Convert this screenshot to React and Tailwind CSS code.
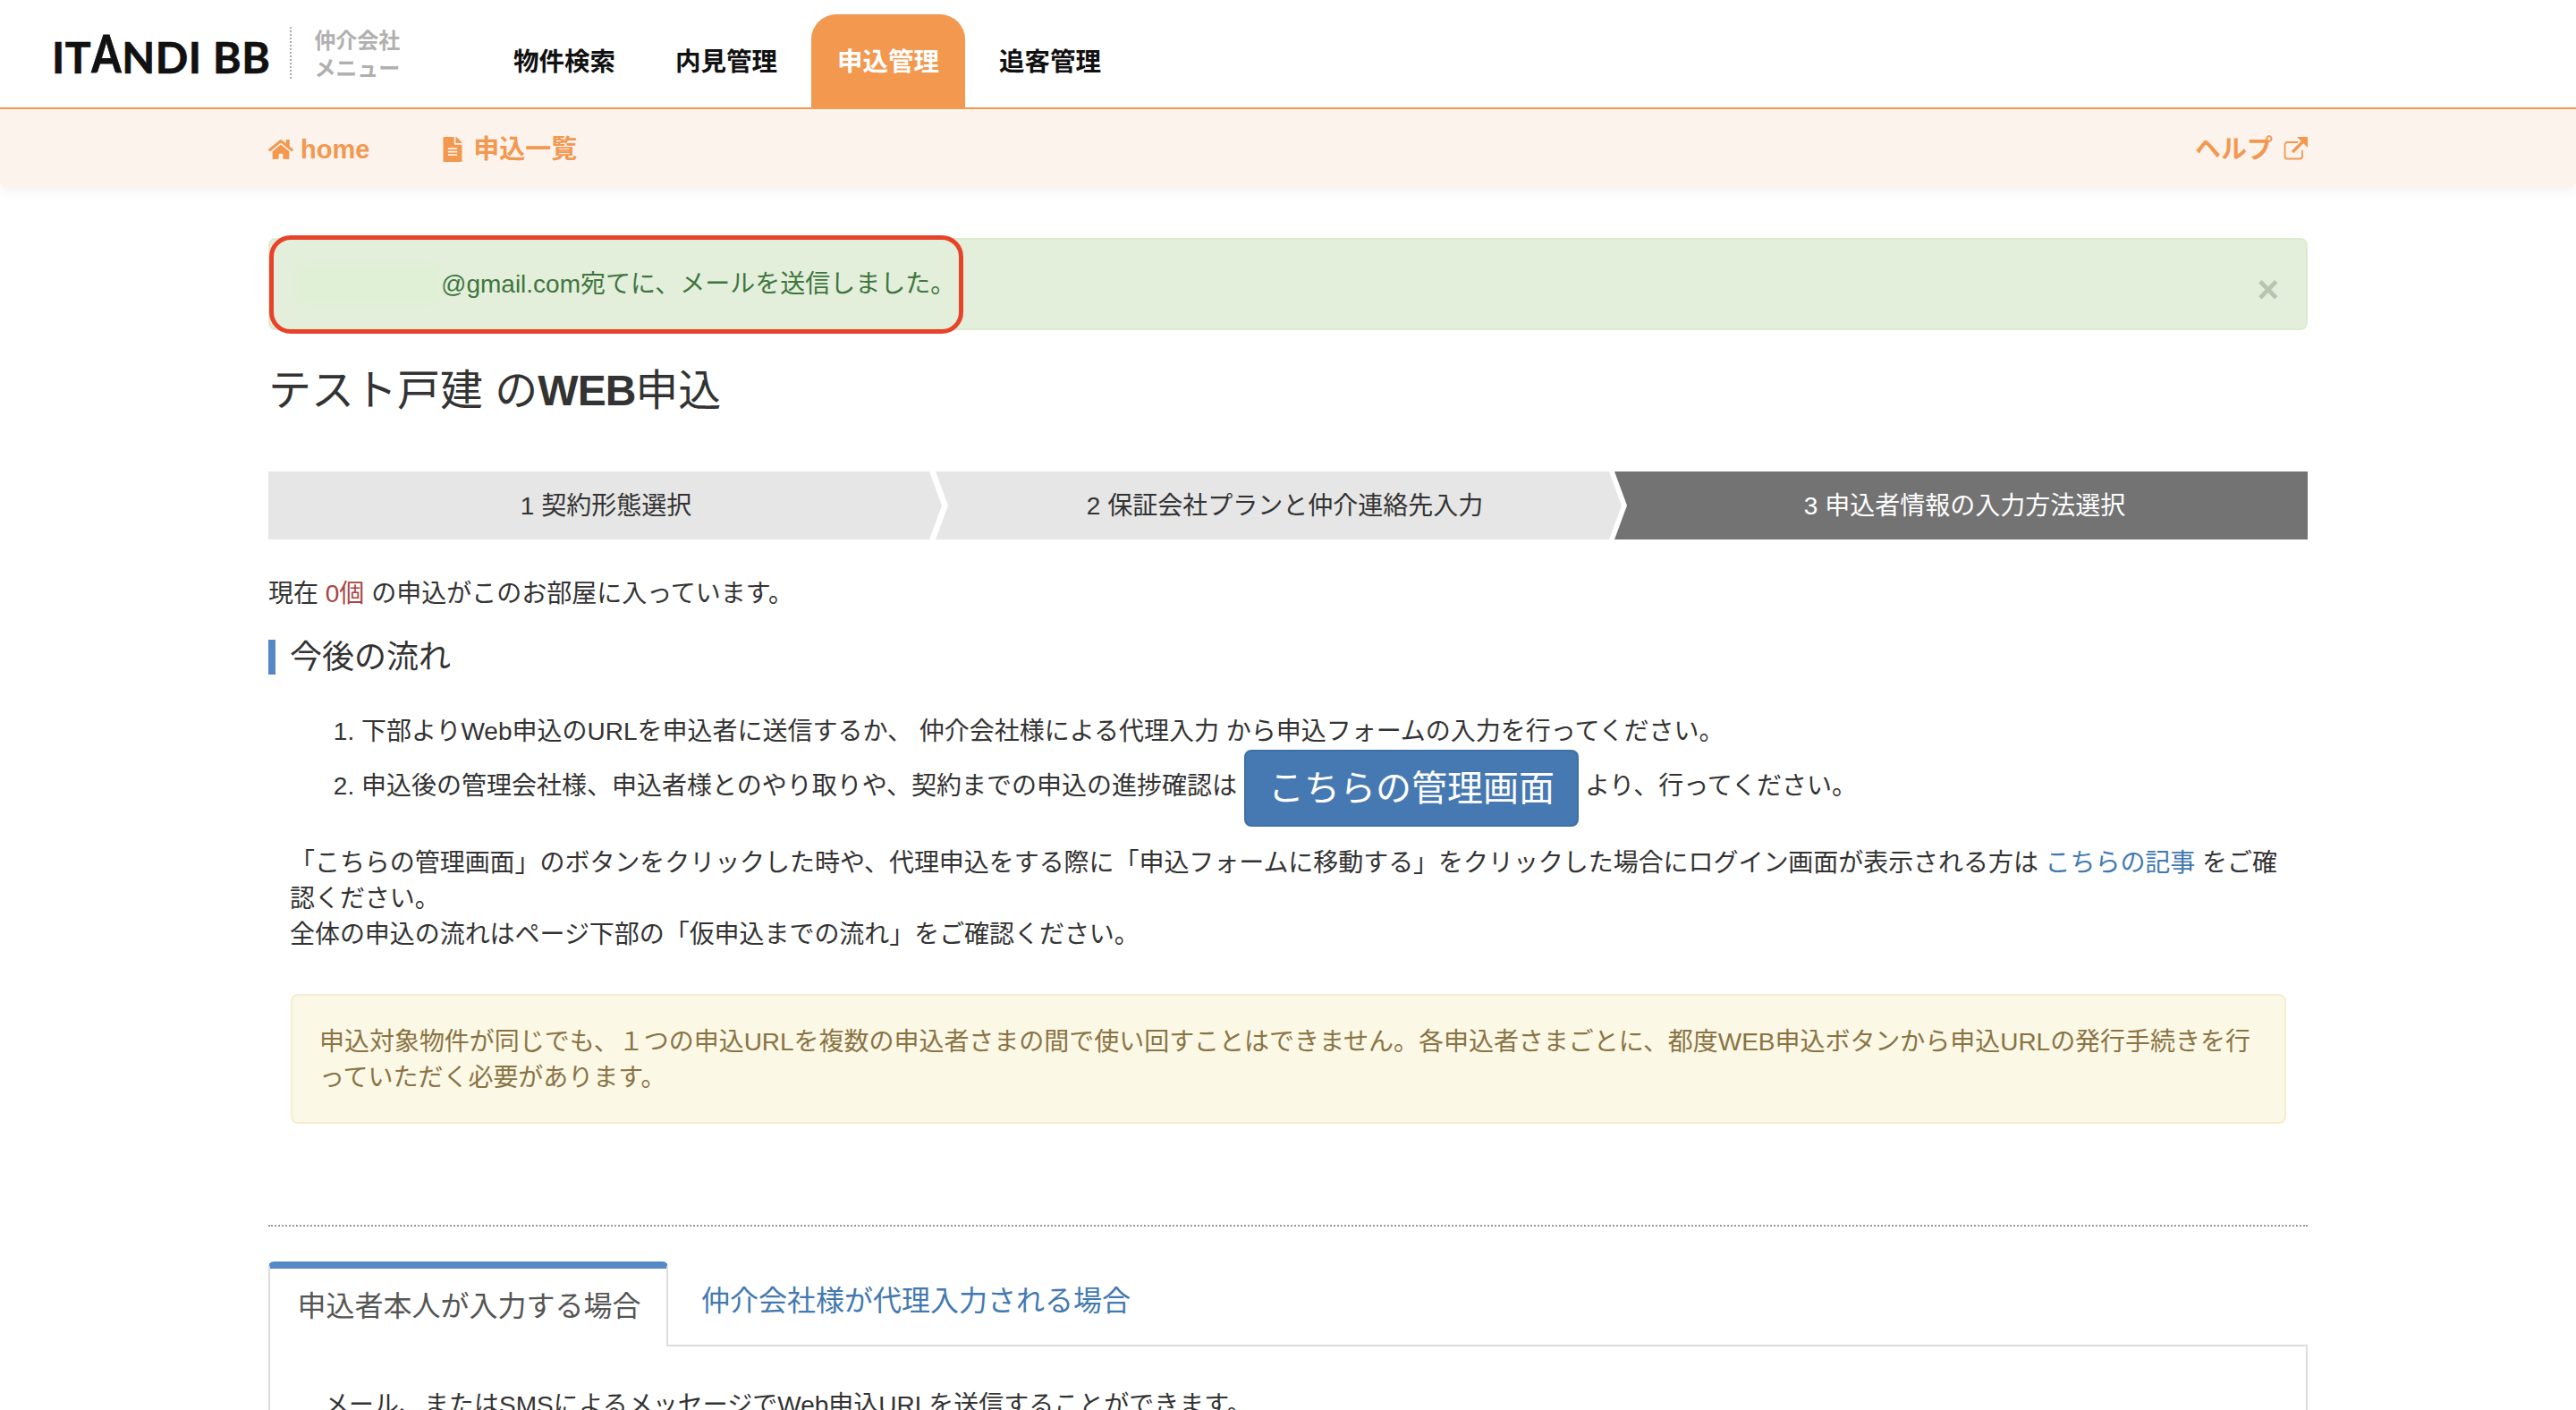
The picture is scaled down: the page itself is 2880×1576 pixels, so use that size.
import { FaHome, FaFileAlt } from 'react-icons/fa';

const navItems = ['物件検索', '内見管理', '申込管理', '追客管理'];

function ExternalIcon() {
  return (
    <svg viewBox="0 0 27 26" className="w-[27px] h-[26px] ml-[12px] mt-[-3px]" fill="none" stroke="#f2984f">
      <path d="M16 6H4.500a3 3 0 0 0-3 3v12.500a3 3 0 0 0 3 3H18a3 3 0 0 0 3-3V15" strokeWidth="1.800" />
      <path d="M10 17 L22 5" strokeWidth="3.400" />
      <path d="M15 0h12v12z" fill="#f2984f" stroke="none" />
    </svg>
  );
}

export default function App() {
  return (
    <div className="h-[1576px] overflow-hidden bg-white text-[28px] leading-[40px] text-[#333] font-['Liberation_Sans','Noto_Sans_CJK_JP',sans-serif]">
      <header className="h-[122px] flex border-b-2 border-[#f2984f] bg-white">
        <div className="w-[545px] shrink-0 flex items-center pl-[58px]">
          <span className="font-['Lato',sans-serif] font-bold text-[48px] leading-none tracking-[0.6px] [-webkit-text-stroke:0.7px_#111] text-[#111] mt-[8px]">
            IT<span className="inline-block origin-bottom scale-y-[1.2]">A</span>NDI BB
          </span>
          <div className="h-[58px] ml-[22px] border-l-2 border-dotted border-[#aaa] mt-[-2px]"></div>
          <div className="ml-[25px] text-[24px] leading-[31px] font-bold text-[#b0b0b0] mt-[1px]">
            <div>仲介会社</div>
            <div>メニュー</div>
          </div>
        </div>
        <nav className="flex gap-[9px] pt-[16px] text-[28.5px]">
          {navItems.map((item) => (
            <div
              key={item}
              className={
                item === '申込管理'
                  ? 'w-[172px] h-[106px] rounded-t-[28px] bg-[#f2984f] text-white font-bold flex items-center justify-center'
                  : 'w-[172px] h-[106px] text-[#111] font-bold flex items-center justify-center'
              }
            >
              {item}
            </div>
          ))}
        </nav>
      </header>

      <div className="h-[88px] bg-[#fdf3ed] rounded-b-[8px] shadow-[0_6px_12px_rgba(0,0,0,0.04)] px-[300px] flex items-center justify-between font-bold text-[29px] text-[#f2984f] pt-[2px]">
        <div className="flex items-center">
          <FaHome className="w-[28px] h-[26px] mr-[8px]" />
          <span className="mr-[81px]">home</span>
          <FaFileAlt className="w-[24px] h-[28px] mr-[11px]" />
          <span>申込一覧</span>
        </div>
        <div className="flex items-center">
          <span>ヘルプ</span>
          <ExternalIcon />
        </div>
      </div>

      <main className="w-[2280px] mx-auto pt-[56px]">
        <div className="relative h-[103px] flex items-center justify-between bg-[#e3efda] border-2 border-[#dcebcf] rounded-[8px] pl-[29px] pr-[30px] text-[#3f7540]">
          <div className="flex items-center">
            <div className="w-[163px] h-[47px] rounded-[14px] bg-[#e0f0d6] blur-[2px]"></div>
            <span className="ml-[-1px] pt-[1px]">@gmail.com宛てに、メールを送信しました。</span>
          </div>
          <span className="font-bold text-[42px] leading-none text-[#b7c5b0] mt-[12px]">×</span>
          <div className="absolute top-[-5px] left-[-1px] w-[776px] h-[110px] border-[5px] border-[#e8432a] rounded-[24px]"></div>
        </div>

        <h1 className="mt-[35px] text-[48px] leading-[66px] font-normal">
          テスト戸建 の<span className="font-bold tracking-[-1px]">WEB</span>申込
        </h1>

        <div className="mt-[57px] flex h-[76px] text-[28px]">
          <div className="w-[755px] bg-[#e6e6e6] flex items-center justify-center pt-[1px] [clip-path:polygon(0_0,739px_0,753px_50%,739px_100%,0_100%)]">
            <span>1 契約形態選択</span>
          </div>
          <div className="w-[767px] ml-[-9px] pl-[14px] pt-[1px] bg-[#e6e6e6] flex items-center justify-center [clip-path:polygon(0_0,753px_0,767px_50%,753px_100%,0_100%,14px_50%)]">
            <span>2 保証会社プランと仲介連絡先入力</span>
          </div>
          <div className="flex-1 ml-[-8px] pl-[8px] pt-[1px] bg-[#737373] text-white flex items-center justify-center [clip-path:polygon(0_0,100%_0,100%_100%,0_100%,14px_50%)]">
            <span>3 申込者情報の入力方法選択</span>
          </div>
        </div>

        <p className="mt-[41px]">
          現在 <span className="text-[#a94442]">0個</span> の申込がこのお部屋に入っています。
        </p>

        <h2 className="mt-[31px] h-[39px] border-l-[8px] border-[#5588c5] pl-[16px] text-[36px] leading-[40px] font-normal">今後の流れ</h2>

        <ol className="mt-[44px] list-decimal pl-[104px]">
          <li>下部よりWeb申込のURLを申込者に送信するか、 仲介会社様による代理入力 から申込フォームの入力を行ってください。</li>
          <li>
            申込後の管理会社様、申込者様とのやり取りや、契約までの申込の進捗確認は
            <a className="inline-block align-middle ml-[8px] mr-[7px] h-[86px] px-[25px] rounded-[8px] bg-[#4679b2] border-2 border-[#3f6fa6] text-white text-[40px] leading-[82px]">こちらの管理画面</a>
            より、行ってください。
          </li>
        </ol>

        <div className="mt-[21px] ml-[24px] mr-[24px]">
          <p className="tracking-[-0.05px]">
            「こちらの管理画面」のボタンをクリックした時や、代理申込をする際に「申込フォームに移動する」をクリックした場合にログイン画面が表示される方は <a className="text-[#4279b0]">こちらの記事</a> をご確認ください。
          </p>
          <p className="tracking-[-0.05px]">全体の申込の流れはページ下部の「仮申込までの流れ」をご確認ください。</p>

          <div className="mt-[46px] ml-[1px] h-[145px] bg-[#fbf8e6] border-2 border-[#f7ecd2] rounded-[8px] px-[30px] pt-[32px] text-[#8a7344] tracking-[-0.03px]">
            申込対象物件が同じでも、１つの申込URLを複数の申込者さまの間で使い回すことはできません。各申込者さまごとに、都度WEB申込ボタンから申込URLの発行手続きを行っていただく必要があります。
          </div>
        </div>

        <hr className="mt-[113px] border-0 border-t-2 border-dotted border-[#999]" />

        <div className="mt-[39px] flex border-b-2 border-[#ddd] h-[95px] text-[32px]">
          <div className="w-[447px] h-[95px] bg-white border-x-2 border-[#ddd] border-t-[8px] border-t-[#5588c5] rounded-t-[6px] text-[#555] flex items-center justify-center pb-[3px] pl-[2px]">申込者本人が入力する場合</div>
          <a className="ml-[37px] mt-[11px] text-[#4279b0] leading-[66px]">仲介会社様が代理入力される場合</a>
        </div>

        <div className="border-x-2 border-[#ddd] pl-[60px] pr-[64px] pt-[46px] h-[200px]">
          メール、またはSMSによるメッセージでWeb申込URLを送信することができます。
        </div>
      </main>
    </div>
  );
}
